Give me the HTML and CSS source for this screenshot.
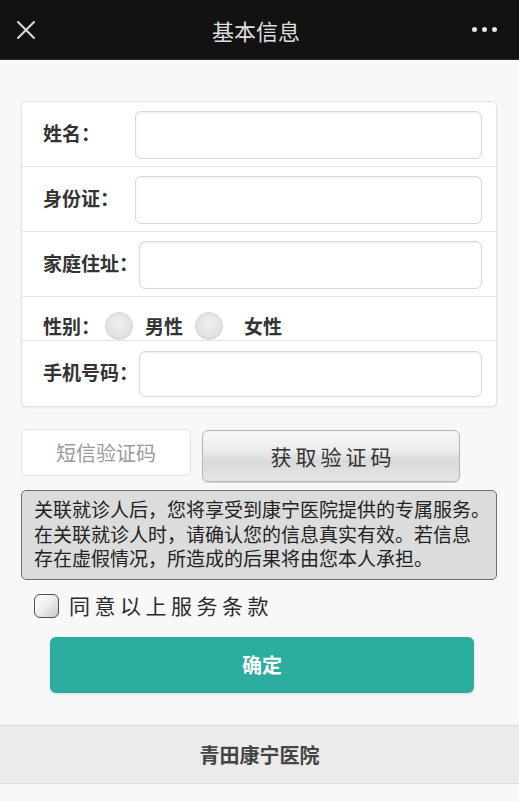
FILE: index.html
```html
<!DOCTYPE html>
<html lang="zh-CN">
<head>
<meta charset="utf-8">
<title>基本信息</title>
<link rel="stylesheet" href="styles.css">
</head>
<body>
<header class="topbar">
  <svg class="close" width="20" height="20" viewBox="0 0 20 20"><path d="M2 2 L18 18 M18 2 L2 18" stroke="#dcdcdc" stroke-width="2" fill="none" stroke-linecap="round"/></svg>
  <h1 class="title">基本信息</h1>
  <div class="more"><span class="dot"></span><span class="dot"></span><span class="dot"></span></div>
</header>
<main class="main">
  <section class="card">
    <div class="row">
      <label class="label">姓名：</label>
      <input class="field" type="text">
    </div>
    <div class="row">
      <label class="label">身份证：</label>
      <input class="field" type="text">
    </div>
    <div class="row">
      <label class="label">家庭住址：</label>
      <input class="field" type="text">
    </div>
    <div class="row row-gender">
      <span class="label label-short">性别：</span>
      <span class="radio"></span>
      <span class="opt">男性</span>
      <span class="radio"></span>
      <span class="opt opt-far">女性</span>
    </div>
    <div class="row row-last">
      <label class="label">手机号码：</label>
      <input class="field" type="text">
    </div>
  </section>
  <div class="sms">
    <div class="sms-input">短信验证码</div>
    <button class="sms-btn" type="button">获取验证码</button>
  </div>
  <div class="notice">关联就诊人后，您将享受到康宁医院提供的专属服务。<br>在关联就诊人时，请确认您的信息真实有效。若信息<br>存在虚假情况，所造成的后果将由您本人承担。</div>
  <div class="agree">
    <span class="check"></span>
    <span class="agree-text">同意以上服务条款</span>
  </div>
  <button class="confirm" type="button">确定</button>
</main>
<footer class="footer">青田康宁医院</footer>
</body>
</html>
```

FILE: styles.css
```css
* { box-sizing: border-box; }
html, body { margin: 0; padding: 0; }
body {
  background: #f8f8f8;
  font-family: "Noto Sans CJK SC", "Noto Sans", sans-serif;
  color: #333;
  width: 519px;
  min-height: 801px;
}
.topbar {
  height: 60px;
  background: #121212;
  display: flex;
  align-items: center;
  justify-content: space-between;
  padding: 0 22px 0 16px;
  border-bottom: 1px solid #2a2a2a;
}
.close { display: block; }
.title {
  margin: 0;
  font-size: 22px;
  font-weight: 400;
  color: #dedede;
  padding-left: 4px;
}
.more { display: flex; gap: 5px; align-items: center; }
.dot { width: 5px; height: 5px; border-radius: 50%; background: #e8e8e8; }
.main { padding: 41px 22px 0 21px; }
.card {
  background: #fff;
  border: 1px solid #e2e2e2;
  border-radius: 5px;
  box-shadow: 0 1px 2px rgba(0,0,0,0.06);
}
.row {
  display: flex;
  align-items: center;
  height: 65px;
  padding: 0 14px 0 21px;
  border-bottom: 1px solid #e4e4e4;
}
.label {
  min-width: 91px;
  margin-right: 1px;
  font-size: 19px;
  font-weight: 700;
  color: #333;
  white-space: nowrap;
  line-height: 1;
  margin-top: -4px;
}
.field {
  flex: 1;
  height: 48px;
  border: 1px solid #d9d9d9;
  border-radius: 6px;
  background: #fff;
  box-shadow: inset 0 1px 2px rgba(0,0,0,0.08);
  outline: none;
  margin-top: 1px;
}
.row-gender {
  height: 44px;
  align-items: flex-end;
  padding-bottom: 0;
}
.label-short { min-width: 0; margin-right: 5px; margin-top: 0; margin-bottom: 5px; }
.radio {
  width: 28px;
  height: 28px;
  border-radius: 50%;
  border: 1px solid #d4d4d4;
  background: radial-gradient(circle at 50% 40%, #f0f0f0 0%, #e2e2e2 60%, #d6d6d6 100%);
}
.opt {
  font-size: 19px;
  font-weight: 700;
  color: #333;
  line-height: 1;
  margin: 0 12px 5px 12px;
}
.opt-far { margin-left: 21px; }
.row-last { height: 65px; border-bottom: none; }
.row-last .field { height: 46px; }
.sms {
  display: flex;
  align-items: flex-start;
  margin-top: 22px;
}
.sms-input {
  width: 170px;
  height: 47px;
  background: #fff;
  border: 1px solid #e2e2e2;
  border-radius: 6px;
  display: flex;
  align-items: center;
  justify-content: center;
  font-size: 20px;
  color: #9a9a9a;
}
.sms-btn {
  margin-left: 11px;
  margin-top: 1px;
  width: 258px;
  height: 52px;
  border: 1px solid #b4b4b4;
  border-radius: 6px;
  background: linear-gradient(to bottom, #f6f6f6 0%, #ececec 40%, #d9d9d9 60%, #e6e6e6 100%);
  font-family: "Noto Sans CJK SC", sans-serif;
  font-size: 21px;
  letter-spacing: 4px;
  color: #333;
  padding: 0 0 0 4px;
  box-shadow: 0 1px 1px rgba(0,0,0,0.15);
}
.notice {
  margin-top: 8px;
  background: #dcdcdc;
  border: 1px solid #6e6e6e;
  border-radius: 5px;
  padding: 6px 2px 8px 12px;
  font-size: 19px;
  line-height: 24.5px;
  color: #222;
  white-space: nowrap;
}
.agree {
  display: flex;
  align-items: center;
  margin: 14px 0 0 13px;
  height: 24px;
}
.check {
  width: 25px;
  height: 24px;
  border: 1.5px solid #505050;
  border-radius: 6px;
  background: linear-gradient(135deg, #ffffff 0%, #ececec 50%, #c8c8c8 100%);
}
.agree-text {
  margin-left: 10px;
  font-size: 21px;
  letter-spacing: 4.5px;
  color: #2a2a2a;
  line-height: 1;
}
.confirm {
  display: block;
  margin: 19px 0 0 29px;
  width: 424px;
  height: 56px;
  border: none;
  border-radius: 6px;
  background: #2aac9f;
  color: #fff;
  font-family: "Noto Sans CJK SC", sans-serif;
  font-size: 20px;
  font-weight: 700;
  box-shadow: 0 1px 3px rgba(0,0,0,0.12);
}
.footer {
  margin-top: 32px;
  height: 59px;
  background: #ebebeb;
  border-top: 1px solid #dcdcdc;
  border-bottom: 1px solid #dcdcdc;
  display: flex;
  align-items: center;
  justify-content: center;
  font-size: 20px;
  font-weight: 700;
  color: #444;
}
```
